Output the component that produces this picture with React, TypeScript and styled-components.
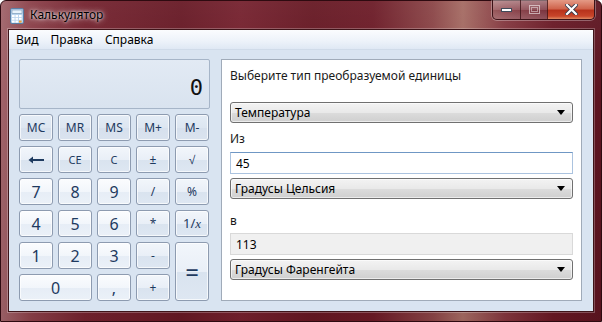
import React from 'react';
import styled, { createGlobalStyle, css } from 'styled-components';

const GlobalStyle = createGlobalStyle`
  html, body {
    margin: 0;
    padding: 0;
    overflow: hidden;
    background: #ffffff;
  }
  * {
    box-sizing: border-box;
  }
`;

const Window = styled.div`
  width: 602px;
  height: 322px;
  display: flex;
  flex-direction: column;
  font-family: 'Noto Sans', 'Liberation Sans', sans-serif;
  background:
    linear-gradient(180deg, rgba(255, 255, 255, 0.06) 0%, rgba(0, 0, 0, 0) 30%, rgba(0, 0, 0, 0.05) 100%),
    linear-gradient(90deg, #a0646a 0%, #8a3f48 5%, #73222e 14%, #661824 30%, #74202d 40%, #651722 52%, #6b1a26 62%, #8a4446 72%, #a46a62 77%, #83363e 84%, #681824 92%, #5c1420 100%);
  border: 1px solid #2e0a10;
  border-radius: 6px 6px 0 0;
`;

const TitleBar = styled.div`
  height: 29px;
  display: flex;
  align-items: flex-start;
  padding-left: 9px;
`;

const TitleIcon = styled.div`
  margin-top: 6px;
  width: 14px;
  height: 16px;
`;

const TitleText = styled.div`
  margin-top: 6px;
  margin-left: 6px;
  font-size: 12px;
  line-height: 16px;
  color: #000;
  text-shadow: 0 0 6px rgba(255, 255, 255, 0.9), 0 0 3px rgba(255, 255, 255, 0.9);
  flex: 1;
`;

const CaptionGroup = styled.div`
  display: flex;
  margin-top: -1px;
  margin-right: 6px;
  height: 20px;
  border: 1px solid #3b1217;
  border-top: none;
  border-radius: 0 0 5px 5px;
  overflow: hidden;
  box-shadow: 0 0 0 1px rgba(255, 255, 255, 0.3);
`;

const CaptionButton = styled.div<{ $w: number; $close?: boolean }>`
  width: ${(p) => p.$w}px;
  height: 100%;
  display: flex;
  align-items: center;
  justify-content: center;
  border-left: 1px solid rgba(60, 20, 24, 0.8);
  &:first-child {
    border-left: none;
  }
  ${(p) =>
    p.$close
      ? css`
          background: linear-gradient(180deg, #e49a86 0%, #d0654d 45%, #b8331c 55%, #c8452a 85%, #e08a62 100%);
        `
      : css`
          background: linear-gradient(180deg, rgba(255, 255, 255, 0.4) 0%, rgba(255, 255, 255, 0.18) 50%, rgba(255, 255, 255, 0.06) 55%, rgba(255, 255, 255, 0.2) 100%);
        `}
`;

const Client = styled.div`
  flex: 1;
  margin: 0 7px 9px 7px;
  display: flex;
  flex-direction: column;
  border: 1px solid #3e1419;
  box-shadow: 0 0 0 1px rgba(255, 255, 255, 0.25);
  background: #d9e4f1;
`;

const MenuBar = styled.div`
  height: 20px;
  display: flex;
  align-items: center;
  padding-left: 1px;
  background: linear-gradient(180deg, #fbfcfe 0%, #eef3fa 55%, #dfe8f4 100%);
  border-bottom: 1px solid #d0dbe9;
`;

const MenuItem = styled.div`
  font-size: 12px;
  line-height: 16px;
  color: #000;
  padding: 0 6px;
`;

const Body = styled.div`
  flex: 1;
  display: flex;
  gap: 11px;
  padding: 9px 11px 10px 10px;
`;

const Keypad = styled.div`
  width: 191px;
  display: flex;
  flex-direction: column;
  gap: 5px;
`;

const Display = styled.div`
  height: 50px;
  border: 1px solid #a6b5c8;
  border-radius: 2px;
  background: linear-gradient(180deg, #e2eaf4 0%, #d9e3ef 100%);
  display: flex;
  align-items: center;
  justify-content: flex-end;
  padding: 6px 6px 0 0;
  font-family: 'DejaVu Sans Mono', 'Liberation Mono', monospace;
  font-size: 22px;
  color: #111;
`;

const KeyGrid = styled.div`
  display: grid;
  grid-template-columns: repeat(5, 34px);
  grid-auto-rows: 27px;
  gap: 5px;
`;

type KeyKind = 'mem' | 'func' | 'digit';

const Key = styled.div<{ $kind: KeyKind; $wide?: boolean; $tall?: boolean; $size?: number }>`
  grid-column: ${(p) => (p.$wide ? 'span 2' : 'auto')};
  grid-row: ${(p) => (p.$tall ? 'span 2' : 'auto')};
  border: 1px solid #8d9bb0;
  border-radius: 3px;
  box-shadow: inset 0 0 0 1px rgba(255, 255, 255, 0.7);
  display: flex;
  align-items: center;
  justify-content: center;
  color: #1e3a5f;
  font-size: ${(p) => p.$size ?? 12}px;
  line-height: 1;
  ${(p) =>
    p.$kind === 'mem'
      ? css`
          background: linear-gradient(180deg, #e4ecf6 0%, #dde6f1 50%, #d6e0ed 51%, #dae3ef 100%);
        `
      : p.$kind === 'func'
      ? css`
          background: linear-gradient(180deg, #f2f6fb 0%, #e9eff7 50%, #d9e3ef 51%, #dee7f2 100%);
        `
      : css`
          background: linear-gradient(180deg, #fbfcfe 0%, #f2f6fb 50%, #e6edf6 51%, #ebf1f8 100%);
        `}
`;

const Panel = styled.div`
  flex: 1;
  background: #ffffff;
  border: 1px solid #a0abb9;
  display: flex;
  flex-direction: column;
  padding: 8px 8px 0 8px;
`;

const Caption = styled.div<{ $mt?: number }>`
  font-size: 12px;
  line-height: 16px;
  color: #1a1a1a;
  margin-top: ${(p) => p.$mt ?? 0}px;
`;

const Select = styled.div<{ $mt?: number }>`
  height: 21px;
  margin-top: ${(p) => p.$mt ?? 0}px;
  border: 1px solid #707070;
  border-radius: 3px;
  background: linear-gradient(180deg, #f3f3f3 0%, #e9e9e9 50%, #dcdcdc 51%, #cfcfcf 100%);
  box-shadow: inset 0 0 0 1px rgba(255, 255, 255, 0.6);
  display: flex;
  align-items: center;
  justify-content: space-between;
  padding: 0 7px 0 4px;
  font-size: 12px;
  color: #000;
`;

const Field = styled.div<{ $mt?: number; $readOnly?: boolean }>`
  height: 22px;
  margin-top: ${(p) => p.$mt ?? 0}px;
  display: flex;
  align-items: center;
  padding: 0 5px;
  font-size: 12px;
  color: #000;
  ${(p) =>
    p.$readOnly
      ? css`
          background: #f0f0f0;
          border: 1px solid #d9d9d9;
        `
      : css`
          background: #ffffff;
          border: 1px solid #abc3df;
          border-top-color: #6f97c4;
        `}
`;

const Arrow = () => (
  <svg width="8" height="5" viewBox="0 0 8 5">
    <path d="M0 0 H8 L4 5 Z" fill="#000" />
  </svg>
);

const BackArrow = () => (
  <svg width="16" height="8" viewBox="0 0 16 8">
    <path d="M5 0.5 L0.5 4 L5 7.5 Z" fill="#1e3a5f" />
    <rect x="4" y="3" width="12" height="2" fill="#1e3a5f" />
  </svg>
);

const CalcIcon = () => (
  <svg width="14" height="16" viewBox="0 0 14 16">
    <rect x="0.5" y="0.5" width="13" height="15" rx="1.5" fill="#b8d3ee" stroke="#5a7fa6" />
    <rect x="2" y="2" width="10" height="3.5" fill="#e8f3fc" stroke="#6f8fb0" strokeWidth="0.6" />
    {[0, 1, 2].map((r) =>
      [0, 1, 2].map((c) => (
        <rect key={`${r}-${c}`} x={2 + c * 3.5} y={7 + r * 2.8} width="2.6" height="2" fill={c === 2 && r === 2 ? '#f0a030' : '#ffffff'} />
      ))
    )}
  </svg>
);

const App: React.FC = () => {
  return (
    <>
      <GlobalStyle />
      <Window>
        <TitleBar>
          <TitleIcon>
            <CalcIcon />
          </TitleIcon>
          <TitleText>Калькулятор</TitleText>
          <CaptionGroup>
            <CaptionButton $w={27}>
              <svg width="11" height="4" viewBox="0 0 11 4">
                <rect x="0.5" y="0.5" width="10" height="3" fill="#fff" stroke="#404a5a" />
              </svg>
            </CaptionButton>
            <CaptionButton $w={27}>
              <svg width="11" height="9" viewBox="0 0 11 9">
                <rect x="0.5" y="0.5" width="10" height="8" fill="none" stroke="rgba(255,255,255,0.55)" />
                <rect x="2.5" y="2.5" width="6" height="4" fill="none" stroke="rgba(255,255,255,0.45)" />
              </svg>
            </CaptionButton>
            <CaptionButton $w={47} $close>
              <svg width="13" height="11" viewBox="0 0 13 11">
                <path d="M2 1 L11 10 M11 1 L2 10" stroke="#3a3a4a" strokeWidth="4" strokeLinecap="square" />
                <path d="M2 1 L11 10 M11 1 L2 10" stroke="#ffffff" strokeWidth="2.2" strokeLinecap="square" />
              </svg>
            </CaptionButton>
          </CaptionGroup>
        </TitleBar>
        <Client>
          <MenuBar>
            <MenuItem>Вид</MenuItem>
            <MenuItem>Правка</MenuItem>
            <MenuItem>Справка</MenuItem>
          </MenuBar>
          <Body>
            <Keypad>
              <Display>0</Display>
              <KeyGrid>
                <Key $kind="mem">MC</Key>
                <Key $kind="mem">MR</Key>
                <Key $kind="mem">MS</Key>
                <Key $kind="mem">M+</Key>
                <Key $kind="mem">M-</Key>

                <Key $kind="func"><BackArrow /></Key>
                <Key $kind="func" $size={11}>CE</Key>
                <Key $kind="func" $size={11}>C</Key>
                <Key $kind="func">±</Key>
                <Key $kind="func">√</Key>

                <Key $kind="digit" $size={16}>7</Key>
                <Key $kind="digit" $size={16}>8</Key>
                <Key $kind="digit" $size={16}>9</Key>
                <Key $kind="func">/</Key>
                <Key $kind="func">%</Key>

                <Key $kind="digit" $size={16}>4</Key>
                <Key $kind="digit" $size={16}>5</Key>
                <Key $kind="digit" $size={16}>6</Key>
                <Key $kind="func">*</Key>
                <Key $kind="func" $size={13}>
                  1/<i style={{ fontFamily: "'Liberation Serif', serif" }}>x</i>
                </Key>

                <Key $kind="digit" $size={16}>1</Key>
                <Key $kind="digit" $size={16}>2</Key>
                <Key $kind="digit" $size={16}>3</Key>
                <Key $kind="func">-</Key>
                <Key $kind="func" $tall $size={24}>=</Key>

                <Key $kind="digit" $wide $size={16}>0</Key>
                <Key $kind="digit" $size={16}>,</Key>
                <Key $kind="func">+</Key>
              </KeyGrid>
            </Keypad>
            <Panel>
              <Caption>Выберите тип преобразуемой единицы</Caption>
              <Select $mt={18}>
                <span>Температура</span>
                <Arrow />
              </Select>
              <Caption $mt={8}>Из</Caption>
              <Field $mt={5}>45</Field>
              <Select $mt={4}>
                <span>Градусы Цельсия</span>
                <Arrow />
              </Select>
              <Caption $mt={14}>в</Caption>
              <Field $mt={4} $readOnly>113</Field>
              <Select $mt={4}>
                <span>Градусы Фаренгейта</span>
                <Arrow />
              </Select>
            </Panel>
          </Body>
        </Client>
      </Window>
    </>
  );
};

export default App;
